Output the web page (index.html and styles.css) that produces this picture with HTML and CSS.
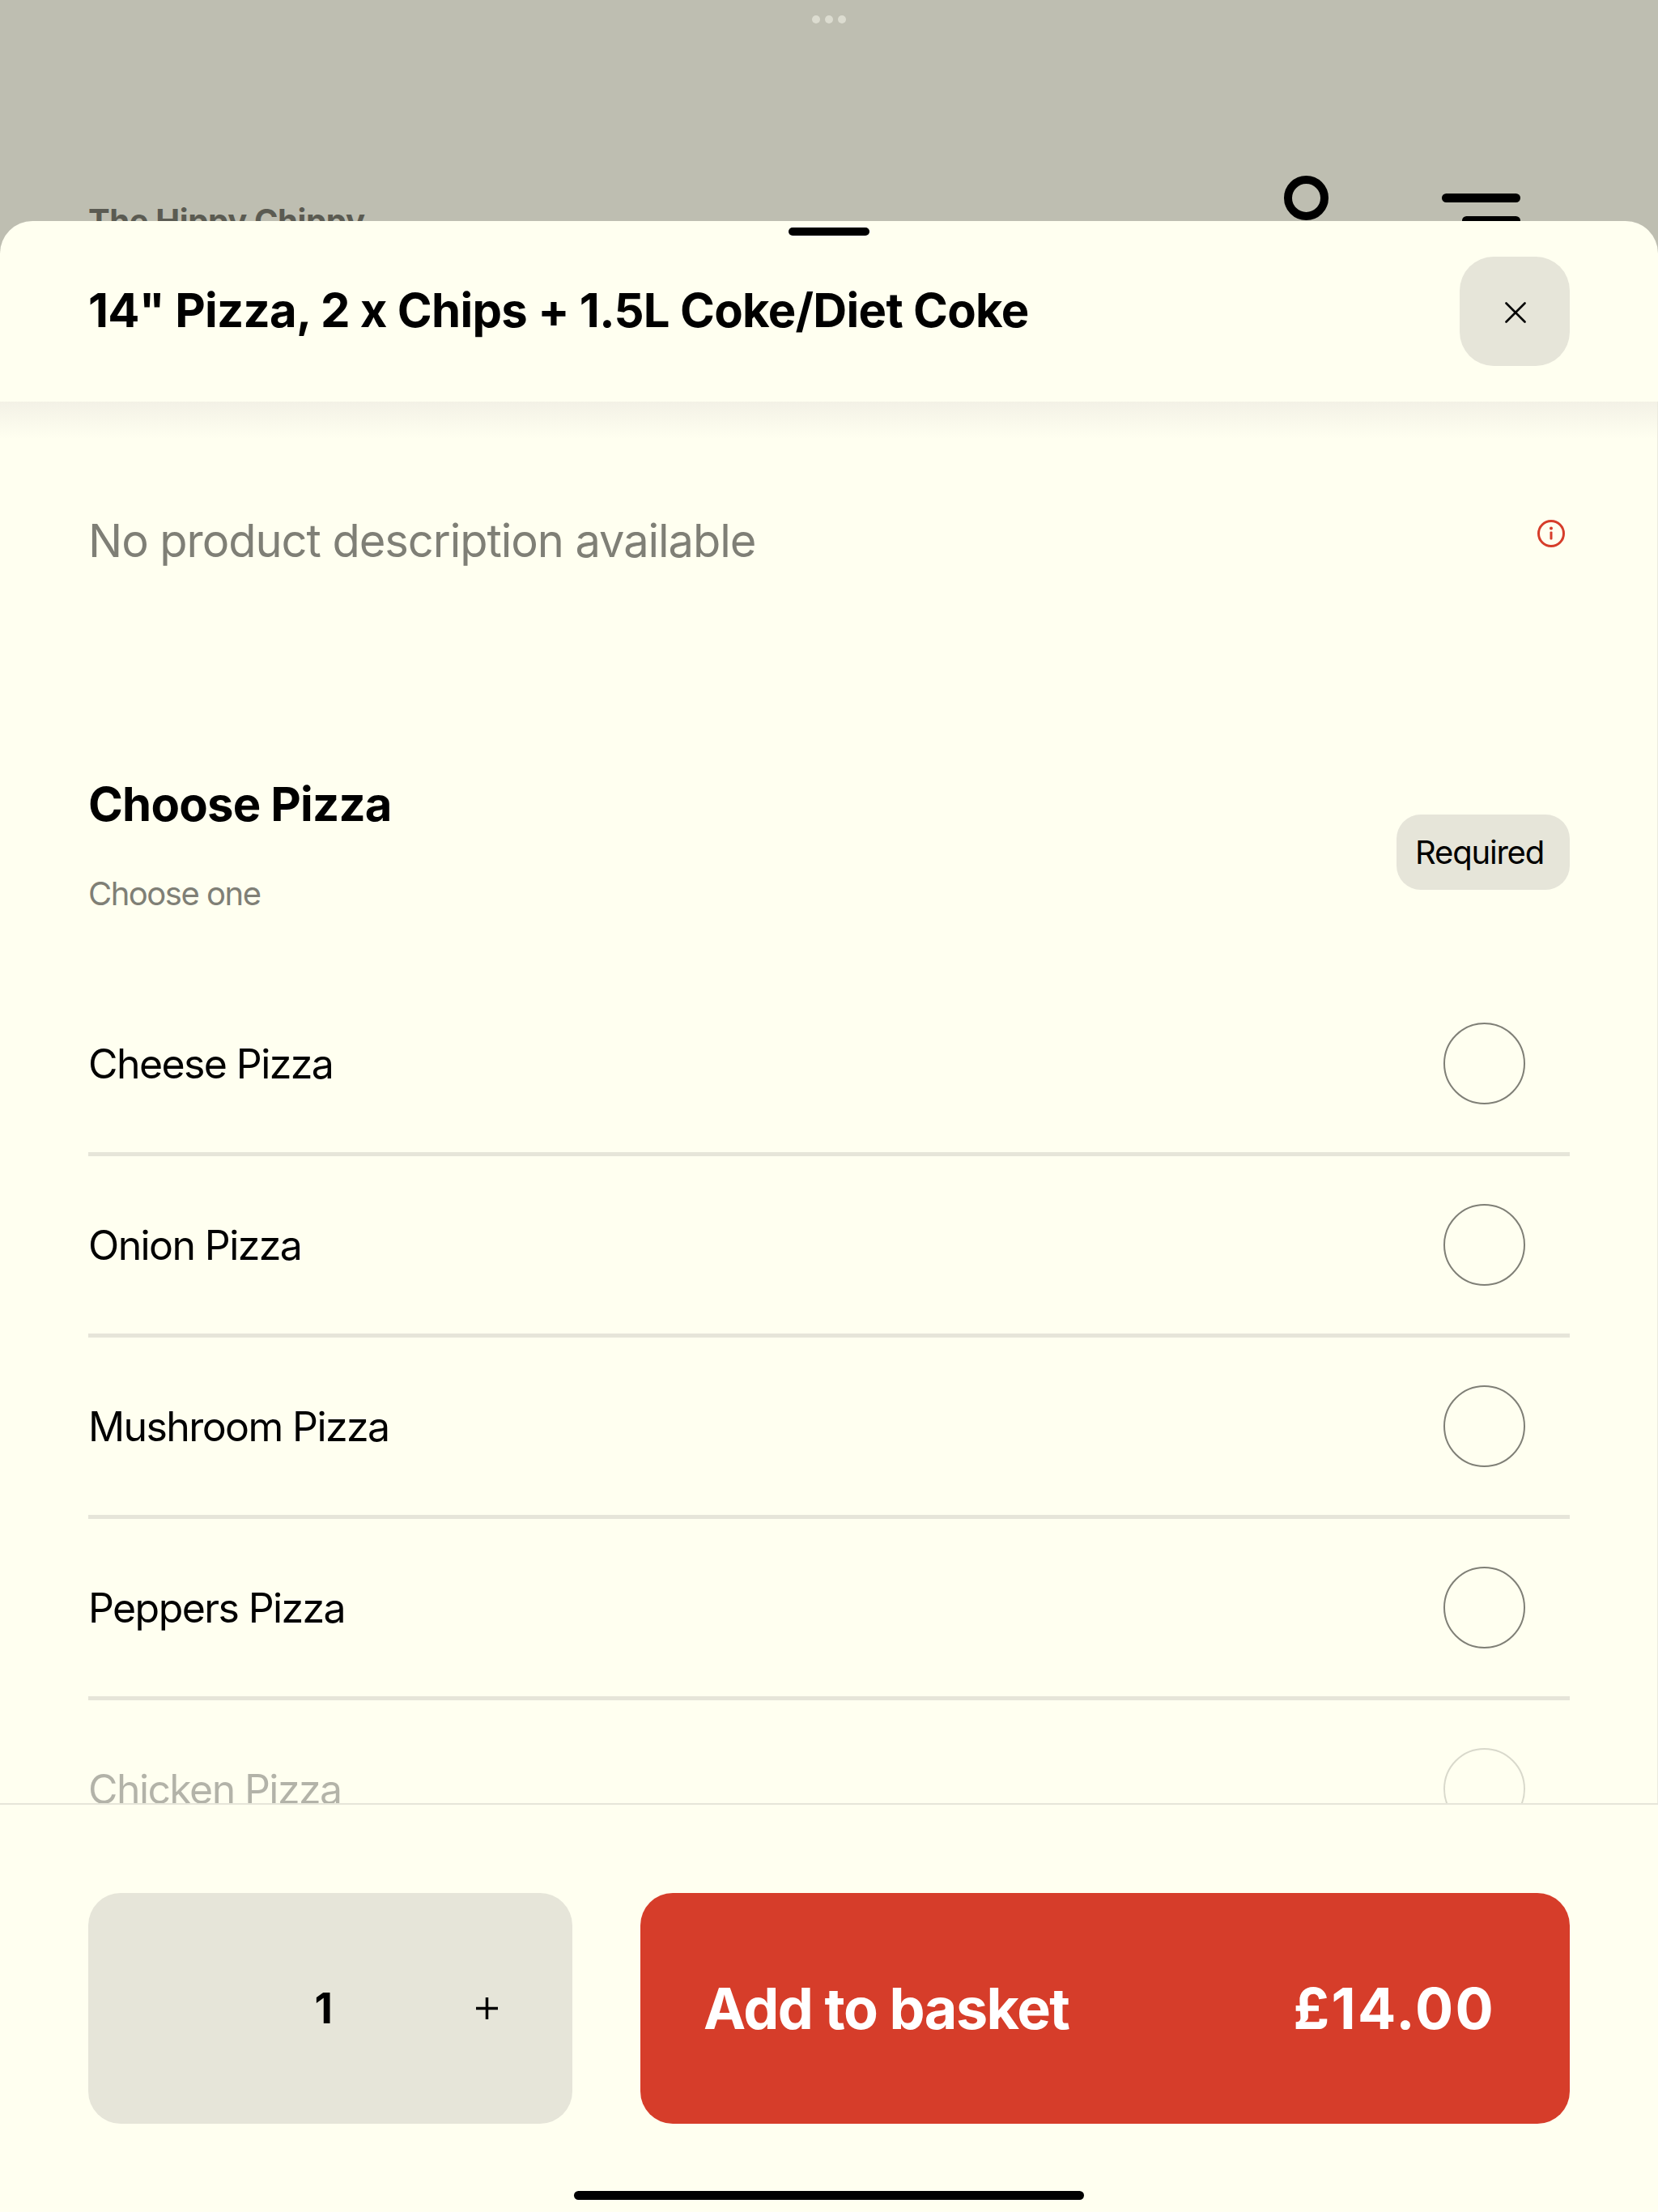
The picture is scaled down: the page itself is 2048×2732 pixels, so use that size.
FILE: index.html
```html
<!DOCTYPE html>
<html lang="en">

<head>
    <meta charset="UTF-8">
    <meta name="viewport" content="width=device-width, initial-scale=1.0">
    <title>14" Pizza, 2 x Chips + 1.5L Coke/Diet Coke</title>
    <link rel="stylesheet" href="styles.css">
</head>

<body>

    <header class="backdrop">
        <div class="dots"><span></span><span></span><span></span></div>
        <div class="shop-bar">
            <h1 class="shop-name">The Hippy Chippy</h1>
            <div class="ring"></div>
            <div class="menu-icon"><span></span><span></span></div>
        </div>
    </header>

    <section class="sheet">
        <div class="handle"></div>

        <div class="sheet-head">
            <h2>14" Pizza, 2 x Chips + 1.5L Coke/Diet Coke</h2>
            <button class="close-btn" aria-label="Close">
                <svg width="26" height="26" viewBox="0 0 26 26">
                    <path d="M1.5 1.5L24.5 24.5M24.5 1.5L1.5 24.5" stroke="#000" stroke-width="2.6" stroke-linecap="round" fill="none" />
                </svg>
            </button>
        </div>

        <div class="scroll-area">
            <div class="description">
                <p>No product description available</p>
                <svg class="info-icon" width="36" height="36" viewBox="0 0 36 36">
                    <circle cx="18" cy="18" r="15.5" stroke="#d63d2a" stroke-width="3" fill="none" />
                    <circle cx="18" cy="11.5" r="2" fill="#d63d2a" />
                    <rect x="16.5" y="15.5" width="3" height="10" rx="1" fill="#d63d2a" />
                </svg>
            </div>

            <div class="group-head">
                <div>
                    <h3>Choose Pizza</h3>
                    <p>Choose one</p>
                </div>
                <span class="chip">Required</span>
            </div>

            <ul class="options">
                <li><span>Cheese Pizza</span><i class="radio"></i></li>
                <li><span>Onion Pizza</span><i class="radio"></i></li>
                <li><span>Mushroom Pizza</span><i class="radio"></i></li>
                <li><span>Peppers Pizza</span><i class="radio"></i></li>
                <li><span>Chicken Pizza</span><i class="radio"></i></li>
            </ul>

            <div class="fade"></div>
        </div>

        <footer class="sheet-foot">
            <div class="stepper">
                <span class="qty">1</span>
                <span class="plus">
                    <svg width="27" height="27" viewBox="0 0 27 27">
                        <path d="M13.5 0V27M0 13.5H27" stroke="#000" stroke-width="3.5" fill="none" />
                    </svg>
                </span>
            </div>
            <button class="add-btn"><span class="add-label">Add to basket</span><span class="price">£14.00</span></button>
        </footer>

        <div class="home-bar"></div>
    </section>

</body>

</html>
```

FILE: styles.css
```css
html, body {
    margin: 0;
    padding: 0;
    height: 2732px;
    overflow: hidden;
}

body {
    display: flex;
    flex-direction: column;
    background: #bebeb1;
    font-family: Inter, 'Liberation Sans', sans-serif;
    color: #000;
}

h1, h2, h3, p, ul {
    margin: 0;
    padding: 0;
}

/* dimmed page behind the sheet */
.backdrop {
    height: 273px;
    flex: none;
    overflow: hidden;
    box-sizing: border-box;
    padding-top: 19px;
}

.dots {
    display: flex;
    justify-content: center;
    gap: 6px;
}

.dots span {
    width: 10px;
    height: 10px;
    border-radius: 50%;
    background: #dcdcd0;
}

.shop-bar {
    display: flex;
    align-items: flex-start;
    margin-top: 188px;
    padding: 0 170px 0 109px;
}

.shop-name {
    flex: 1;
    margin-top: 32px;
    font-size: 40px;
    line-height: 48px;
    font-weight: 700;
    letter-spacing: -0.4px;
    color: #5b5b52;
}

.ring {
    width: 55px;
    height: 55px;
    box-sizing: border-box;
    border: 10px solid #000;
    border-radius: 50%;
}

.menu-icon {
    display: flex;
    flex-direction: column;
    align-items: flex-end;
    gap: 17px;
    width: 97px;
    margin: 22px 0 0 140px;
}

.menu-icon span {
    width: 100%;
    height: 11px;
    border-radius: 6px;
    background: #000;
}

.menu-icon span + span {
    width: 72px;
}

/* bottom sheet */
.sheet {
    position: relative;
    flex: 1;
    display: flex;
    flex-direction: column;
    min-height: 0;
    background: #fffff0;
    border-radius: 40px 40px 0 0;
}

.handle {
    position: absolute;
    top: 8px;
    left: 974px;
    width: 100px;
    height: 10px;
    border-radius: 5px;
    background: #000;
}

.sheet-head {
    flex: none;
    height: 223px;
    box-sizing: border-box;
    display: flex;
    align-items: center;
    justify-content: space-between;
    padding: 0 109px;
}

.sheet-head h2 {
    margin-top: -3px;
    font-size: 58px;
    font-weight: 700;
    letter-spacing: -0.7px;
}

.close-btn {
    width: 136px;
    height: 135px;
    display: flex;
    align-items: center;
    justify-content: center;
    border: none;
    padding: 2px 0 0 1px;
    border-radius: 42px;
    background: #e6e5d9;
}

.scroll-area {
    position: relative;
    flex: 1;
    min-height: 0;
    overflow: hidden;
    padding: 0 108px 0 109px;
    border-right: 1px solid #ecebdf;
    background: linear-gradient(to bottom, #f3f1e6 0, #fffff0 46px) no-repeat;
}

.description {
    display: flex;
    justify-content: space-between;
    align-items: flex-start;
    padding-top: 135px;
}

.description p {
    font-size: 56px;
    line-height: 74px;
    letter-spacing: -1.05px;
    color: #7f7f76;
}

.info-icon {
    margin: 10px 5px 0 0;
}

.group-head {
    display: flex;
    justify-content: space-between;
    align-items: center;
    margin-top: 253px;
}

.group-head h3 {
    font-size: 58px;
    line-height: 70px;
    font-weight: 700;
    letter-spacing: -0.8px;
}

.group-head p {
    margin-top: 51px;
    font-size: 40px;
    line-height: 50px;
    letter-spacing: -1.5px;
    color: #7f7f76;
}

.chip {
    padding: 0 32px 0 23px;
    height: 93px;
    line-height: 93px;
    margin-top: 17px;
    border-radius: 30px;
    font-size: 40px;
    letter-spacing: -1.2px;
    background: #e6e5d9;
}

.options {
    list-style: none;
    margin-top: 75px;
}

.options li {
    height: 219px;
    display: flex;
    align-items: center;
    justify-content: space-between;
    border-bottom: 5px solid #e6e5d9;
    font-size: 50px;
    letter-spacing: -1.6px;
}

.radio {
    width: 101px;
    height: 101px;
    box-sizing: border-box;
    margin-right: 55px;
    border: 2px solid #7f7f76;
    border-radius: 50%;
}

/* last row sits under the footer, washed out */
.fade {
    position: absolute;
    left: 0;
    right: 0;
    bottom: 0;
    height: 130px;
    background: linear-gradient(to bottom, rgba(255, 255, 240, 0) 6%, rgba(255, 255, 240, 0.7) 20%);
}

.sheet-foot {
    flex: none;
    height: 505px;
    box-sizing: border-box;
    display: flex;
    gap: 84px;
    padding: 109px 109px 0;
    border-top: 2px solid #e6e5d9;
}

.stepper {
    width: 598px;
    height: 285px;
    box-sizing: border-box;
    display: flex;
    align-items: center;
    justify-content: flex-end;
    padding-right: 92px;
    border-radius: 40px;
    background: #e6e5d9;
}

.qty {
    margin-right: 177px;
    font-size: 52px;
    font-weight: 700;
}

.plus {
    display: flex;
}

.add-btn {
    flex: 1;
    height: 285px;
    display: flex;
    align-items: center;
    justify-content: space-between;
    padding: 0 92px 0 78px;
    border: none;
    border-radius: 40px;
    background: #d63d2a;
    color: #fff;
    font-family: inherit;
    font-size: 70px;
    font-weight: 700;
}

.add-label {
    letter-spacing: -1.5px;
}

.price {
    letter-spacing: 2.3px;
}

.home-bar {
    position: absolute;
    left: 709px;
    bottom: 15px;
    width: 630px;
    height: 11px;
    border-radius: 6px;
    background: #000;
}
```
